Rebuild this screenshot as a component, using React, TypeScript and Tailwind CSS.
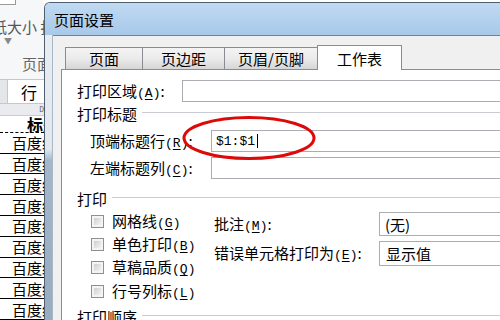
import clsx from "clsx";

const Key = ({ k }: { k: string }) => (
  <span className="font-['Liberation_Mono',monospace] text-[13px]">
    (<u className="underline-offset-2">{k}</u>)
  </span>
);

const Group = ({ title, className }: { title: string; className?: string }) => (
  <div className={clsx("flex items-center h-[22px] pl-[15px]", className)}>
    <span>{title}</span>
    <span className="flex-1 ml-[5px] h-[2px] border-t border-[#c9cdd2] border-b border-b-white" />
  </div>
);

const Check = ({ label, k, h }: { label: string; k: string; h: string }) => (
  <div className={clsx("flex items-center gap-[8px]", h)}>
    <span className="w-[13px] h-[13px] border border-[#8e8f8f] bg-[#f4f4f4] p-[2px]">
      <span className="block w-full h-full bg-gradient-to-br from-[#cfcfcf] to-[#f3f3f3]" />
    </span>
    <span>
      {label}
      <Key k={k} />
    </span>
  </div>
);

const tabs = [
  { name: "页面", w: "w-[77px]" },
  { name: "页边距", w: "w-[82px]" },
  { name: "页眉/页脚", w: "w-[93px]" },
];

const Sheet = () => (
  <div className="w-[44px] shrink-0 flex flex-col bg-white overflow-hidden text-[15px] leading-none">
    <div className="h-[88px] bg-[#f6f7f9] flex flex-col">
      <div className="w-[16px] h-[5px] border-b border-r border-[#9a9a9a] bg-white" />
      <div className="h-[13px]" />
      <div className="h-[16px] flex items-center whitespace-nowrap text-[#555] -ml-[8px]">纸大小 打</div>
      <div className="h-[11px] pl-[4px] text-[8px] text-[#888] flex items-end">▼</div>
      <div className="h-[16px] mt-[10px] flex items-center whitespace-nowrap text-[#666] pl-[22px]">页面设置</div>
    </div>
    <div className="h-[27px] flex border-t border-b border-[#c3c8ce]">
      <div className="w-[8px] bg-[#e4e6e9] border-r border-[#c3c8ce]" />
      <div className="flex-1 flex items-center pl-[13px] text-[16px] bg-white">行</div>
    </div>
    <div className="h-[13px] bg-[#e9ebee] border-b border-[#c9ccd0] flex justify-end items-center text-[7px] text-[#555]">D</div>
    <div className="h-[19px] border-b border-dashed border-black flex items-center pl-[27px] font-bold whitespace-nowrap text-[16px]">
      标题
    </div>
    {Array.from({ length: 9 }).map((_, i) => (
      <div
        key={i}
        className="h-[20.8px] shrink-0 border-b border-black flex items-center pl-[12px] whitespace-nowrap"
      >
        百度经验
      </div>
    ))}
  </div>
);

export default function App() {
  return (
    <div className="relative w-[500px] h-[320px] overflow-hidden flex bg-white text-black text-[15px] font-['Noto_Sans_CJK_SC',sans-serif]">
      <Sheet />
      <div className="flex-1 flex flex-col min-w-0 pt-[2px] bg-white">
        <div className="flex-1 flex flex-col border-t border-l border-[#4f5f70] rounded-tl-[6px] overflow-hidden">
          <div className="h-[32px] shrink-0 flex items-center pl-[9px] bg-gradient-to-b from-[#c0d9f2] via-[#b3d1ee] to-[#a9c9ea] leading-none">
            页面设置
          </div>
          <div className="flex-1 flex min-h-0">
            <div className="w-[8px] shrink-0 border-r border-[#a9b8c6] bg-[linear-gradient(to_bottom,#e6ecf2_0%,#e2e8ee_40%,#a3b6ca_44%,#97abc1_100%)]" />
            <div className="flex-1 min-w-0 flex flex-col bg-[#f0f0f0] border-t border-[#6e8297] pl-[8px] pt-[9px]">
              <div className="h-[24px] shrink-0 flex items-end pl-[4px] leading-none">
                {tabs.map((t) => (
                  <div
                    key={t.name}
                    className={clsx(
                      t.w,
                      "h-[22px] border-t border-l border-[#898c95] bg-gradient-to-b from-[#f4f4f4] via-[#ebebeb] to-[#d6d6d6] flex items-center justify-center",
                    )}
                  >
                    {t.name}
                  </div>
                ))}
                <div className="relative z-10 w-[85px] h-[25px] -mb-px border-t border-l border-r border-[#898c95] bg-white flex items-center justify-center">
                  工作表
                </div>
              </div>
              <div className="flex-1 -mr-[40px] bg-white border-t border-l border-[#898c95] pt-[10px] leading-none">
                <div className="flex items-center h-[22px]">
                  <span className="w-[120px] pl-[15px] shrink-0">
                    打印区域<Key k="A" />:
                  </span>
                  <span className="flex-1 h-[22px] border border-[#abadb3] bg-white" />
                </div>
                <Group title="打印标题" />
                <div className="flex items-center h-[22px] mt-[6px]">
                  <span className="w-[149px] pl-[28px] shrink-0">
                    顶端标题行<Key k="R" />:
                  </span>
                  <span className="flex-1 h-[22px] border border-[#abadb3] bg-white flex items-center pl-[4px] font-['Liberation_Mono',monospace] text-[13px]">
                    $1:$1
                    <span className="ml-[2px] w-px h-[14px] bg-black" />
                  </span>
                </div>
                <div className="flex items-center h-[22px] mt-[5px]">
                  <span className="w-[149px] pl-[28px] shrink-0">
                    左端标题列<Key k="C" />:
                  </span>
                  <span className="flex-1 h-[22px] border border-[#abadb3] bg-white" />
                </div>
                <Group title="打印" className="mt-[8px]" />
                <div className="flex">
                  <div className="w-[152px] shrink-0 pl-[29px] pt-[1px]">
                    <Check label="网格线" k="G" h="h-[23px]" />
                    <Check label="单色打印" k="B" h="h-[23px]" />
                    <Check label="草稿品质" k="Q" h="h-[23px]" />
                    <Check label="行号列标" k="L" h="h-[24px]" />
                  </div>
                  <div className="flex-1 flex flex-col gap-[5px] pt-[3px]">
                    <div className="flex items-center h-[24px]">
                      <span className="w-[165px] shrink-0 pt-[1px]">
                        批注<Key k="M" />:
                      </span>
                      <span className="flex-1 h-[24px] border border-[#abadb3] bg-white flex items-center pl-[5px]">
                        (无)
                      </span>
                    </div>
                    <div className="flex items-center h-[25px]">
                      <span className="w-[165px] shrink-0">
                        错误单元格打印为<Key k="E" />:
                      </span>
                      <span className="flex-1 h-[25px] border border-[#abadb3] bg-white flex items-center pl-[6px]">
                        显示值
                      </span>
                    </div>
                  </div>
                </div>
                <Group title="打印顺序" className="mt-[2px]" />
              </div>
            </div>
          </div>
        </div>
      </div>
      <svg className="absolute left-0 top-0 pointer-events-none" width="500" height="320">
        <ellipse cx="249" cy="138" rx="65" ry="20.5" fill="none" stroke="#dd0a0a" strokeWidth="3" />
      </svg>
    </div>
  );
}
